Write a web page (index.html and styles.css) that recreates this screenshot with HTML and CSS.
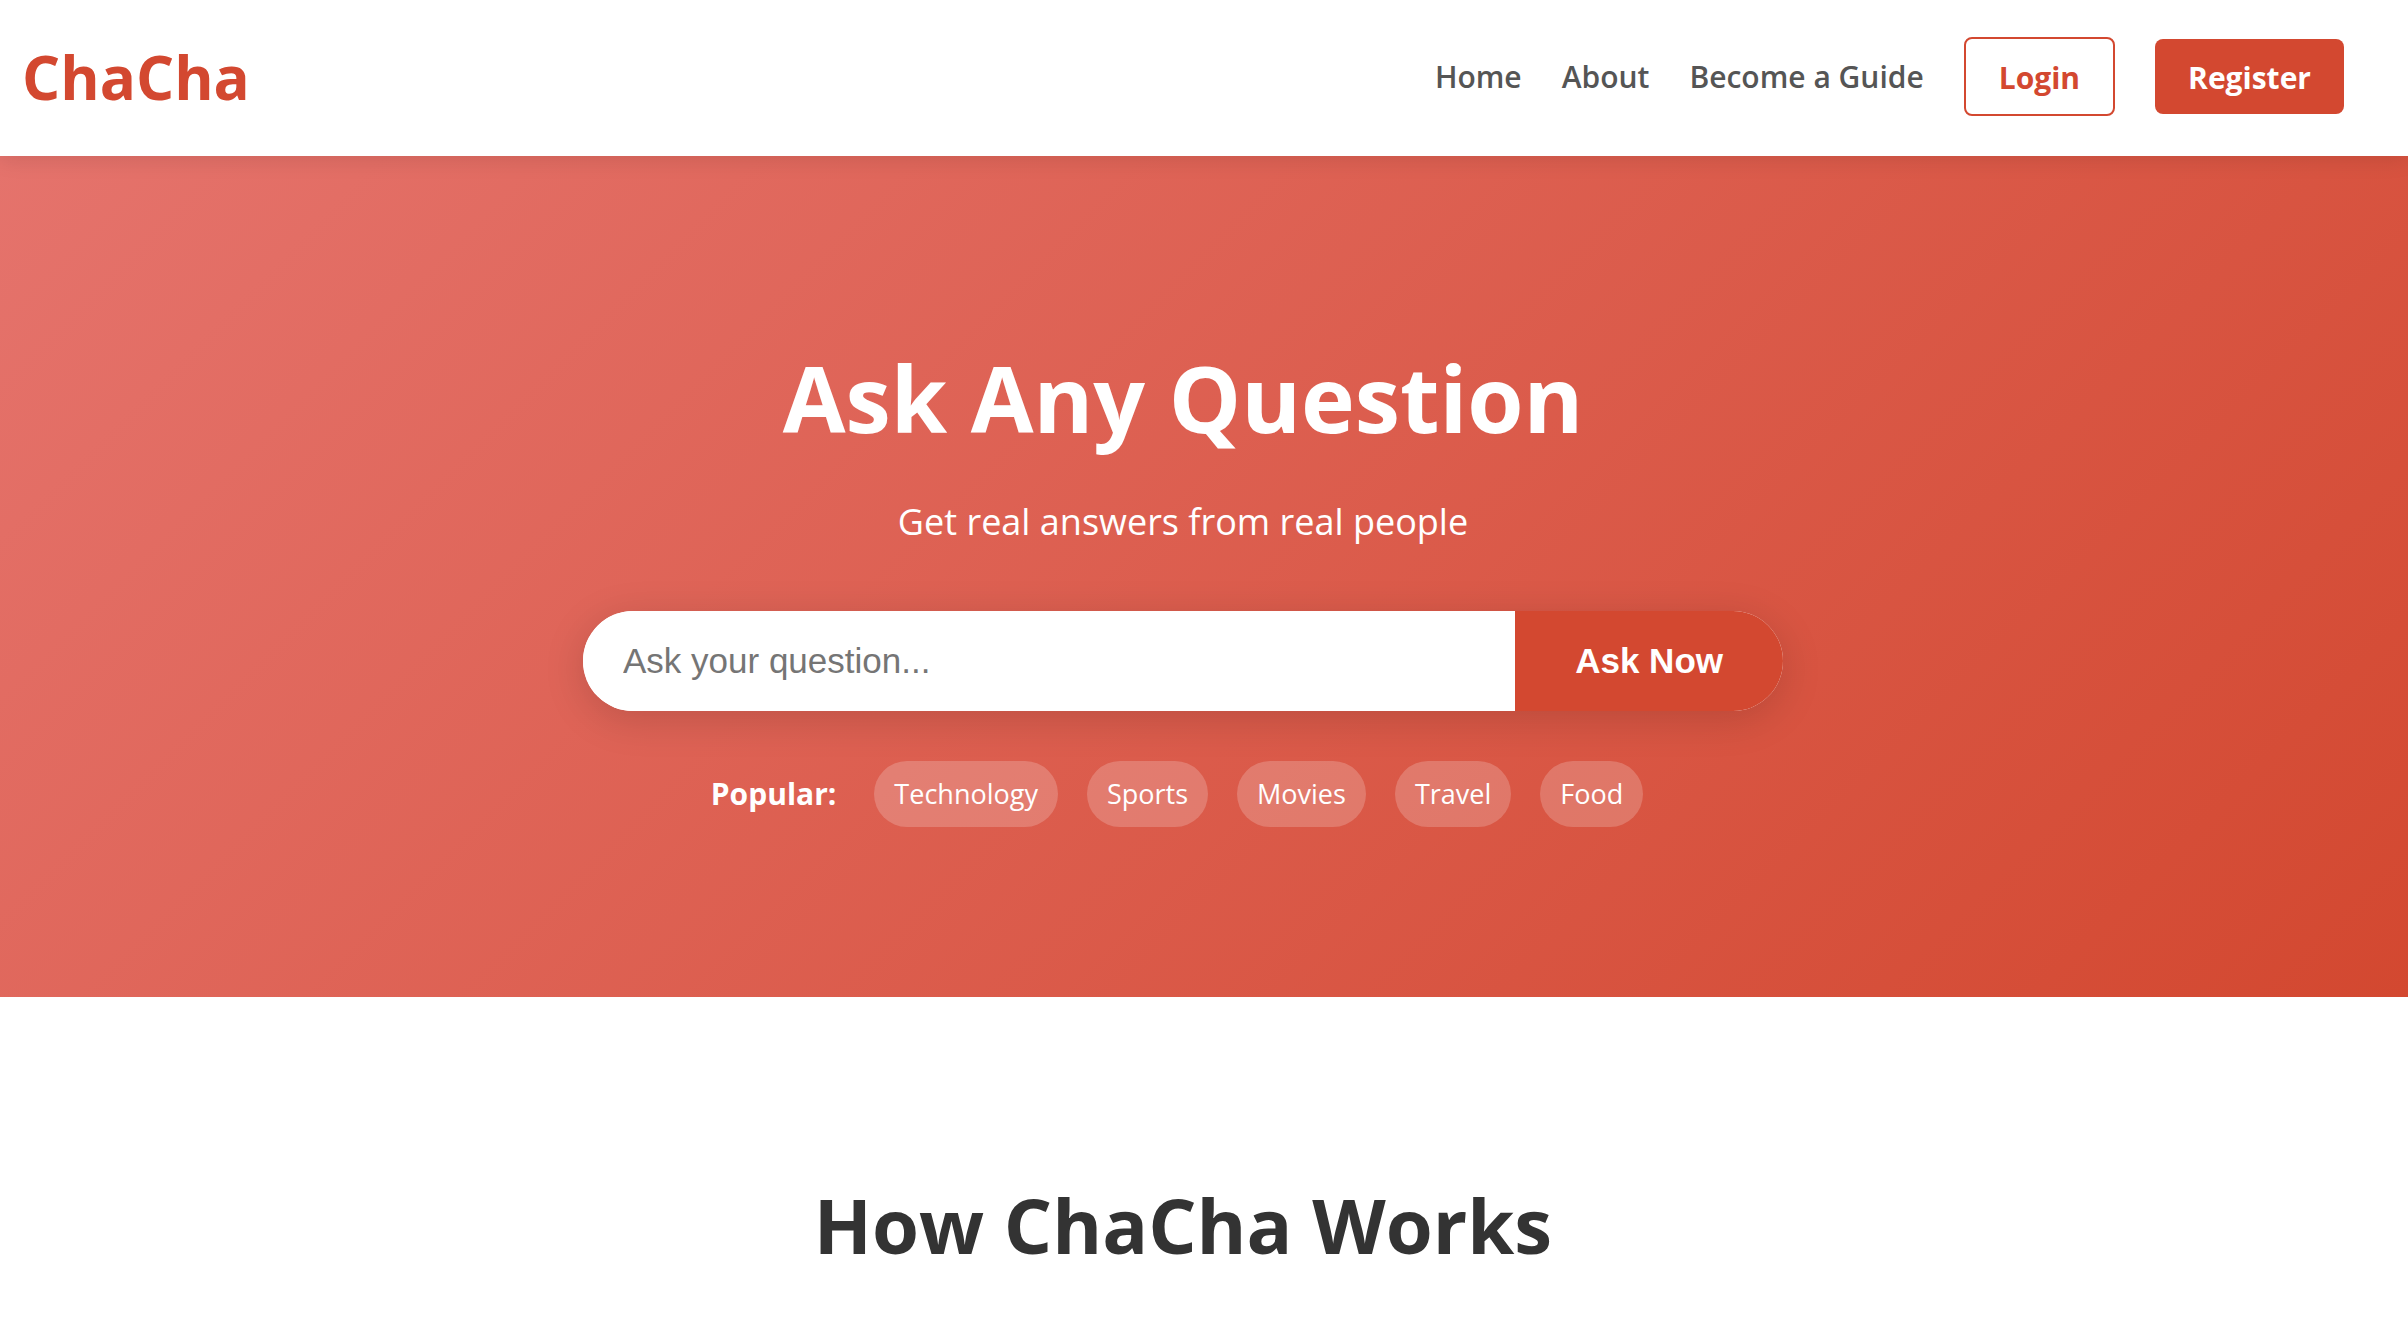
FILE: index.html
```html
<!DOCTYPE html>
<html lang="en">
<head>
  <meta charset="utf-8">
  <meta name="viewport" content="width=device-width, initial-scale=1">
  <title>ChaCha</title>
  <link rel="stylesheet" href="styles.css">
</head>
<body>
  <header class="site-header">
    <a class="logo" href="#">ChaCha</a>
    <nav class="nav" aria-label="Main">
      <a class="nav-link" href="#">Home</a>
      <a class="nav-link" href="#">About</a>
      <a class="nav-link" href="#">Become a Guide</a>
      <a class="btn btn-outline" href="#">Login</a>
      <a class="btn btn-solid" href="#">Register</a>
    </nav>
  </header>
  <main>
    <section class="hero">
      <h1 class="hero-title">Ask Any Question</h1>
      <p class="hero-subtitle">Get real answers from real people</p>
      <form class="search">
        <input class="search-input" type="text" placeholder="Ask your question..." aria-label="Your question">
        <button class="search-button" type="submit">Ask Now</button>
      </form>
      <div class="popular">
        <span class="popular-label">Popular:</span>
        <div class="tags">
          <a class="tag" href="#">Technology</a>
          <a class="tag" href="#">Sports</a>
          <a class="tag" href="#">Movies</a>
          <a class="tag" href="#">Travel</a>
          <a class="tag" href="#">Food</a>
        </div>
      </div>
    </section>
    <section class="how">
      <h2 class="section-title">How ChaCha Works</h2>
    </section>
  </main>
</body>
</html>
```
FILE: styles.css
```css
:root {
  --primary: #d34830;
  --page-left: 24px;
  --page-right: 66px;
}

* {
  box-sizing: border-box;
  margin: 0;
  padding: 0;
}

body {
  font-family: "Segoe UI", "Open Sans", sans-serif;
  font-size: 30px;
  line-height: 52px;
  color: #333;
  background: #fff;
}

a {
  text-decoration: none;
}

.site-header {
  position: relative;
  display: flex;
  align-items: center;
  justify-content: space-between;
  height: 156px;
  padding: 0 64px 4px 22px;
  background: #fff;
  box-shadow: 0 4px 20px rgba(0, 0, 0, 0.1);
}

.logo {
  padding-top: 2px;
  font-size: 60px;
  font-weight: 700;
  line-height: 104px;
  color: var(--primary);
}

.nav {
  display: flex;
  align-items: center;
  gap: 40px;
}

.nav-link {
  padding-top: 2px;
  font-weight: 600;
  color: #555;
}

.btn {
  padding: 13px 33px 10px;
  border-radius: 8px;
  font-weight: 700;
}

.btn-outline {
  border: 2px solid var(--primary);
  color: var(--primary);
}

.btn-solid {
  background: var(--primary);
  color: #fff;
}

.hero {
  display: flex;
  flex-direction: column;
  align-items: center;
  padding: 162px var(--page-right) 170px var(--page-left);
  color: #fff;
  background: linear-gradient(135deg, #e5736c, var(--primary));
}

.hero-title {
  font-size: 91px;
  font-weight: 700;
  line-height: 160px;
}

.hero-subtitle {
  margin-top: 12px;
  font-size: 36px;
  line-height: 64px;
}

.search {
  display: flex;
  width: 100%;
  max-width: 1200px;
  height: 100px;
  margin-top: 57px;
  overflow: hidden;
  border-radius: 50px;
  background: #fff;
  box-shadow: 0 8px 40px rgba(0, 0, 0, 0.15);
}

.search-input {
  flex: 1;
  min-width: 0;
  padding: 0 40px;
  border: 0;
  outline: 0;
  background: #fff;
  font-family: "Liberation Sans", Arial, sans-serif;
  font-size: 35px;
}

.search-input::placeholder {
  color: #757575;
}

.search-button {
  padding: 0 60px;
  border: 0;
  background: var(--primary);
  color: #fff;
  font-family: "Liberation Sans", Arial, sans-serif;
  font-size: 35px;
  font-weight: 700;
}

.popular {
  display: flex;
  align-items: center;
  gap: 38px;
  margin-top: 50px;
  padding-right: 12px;
}

.popular-label {
  font-weight: 700;
}

.tags {
  display: flex;
  gap: 29px;
}

.tag {
  padding: 8px 20px;
  border-radius: 40px;
  background: rgba(255, 255, 255, 0.2);
  color: #fff;
  font-size: 27px;
  line-height: 50px;
}

.how {
  padding: 160px var(--page-right) 48px var(--page-left);
  text-align: center;
}

.section-title {
  font-size: 76px;
  font-weight: 700;
  line-height: 136px;
}
```
